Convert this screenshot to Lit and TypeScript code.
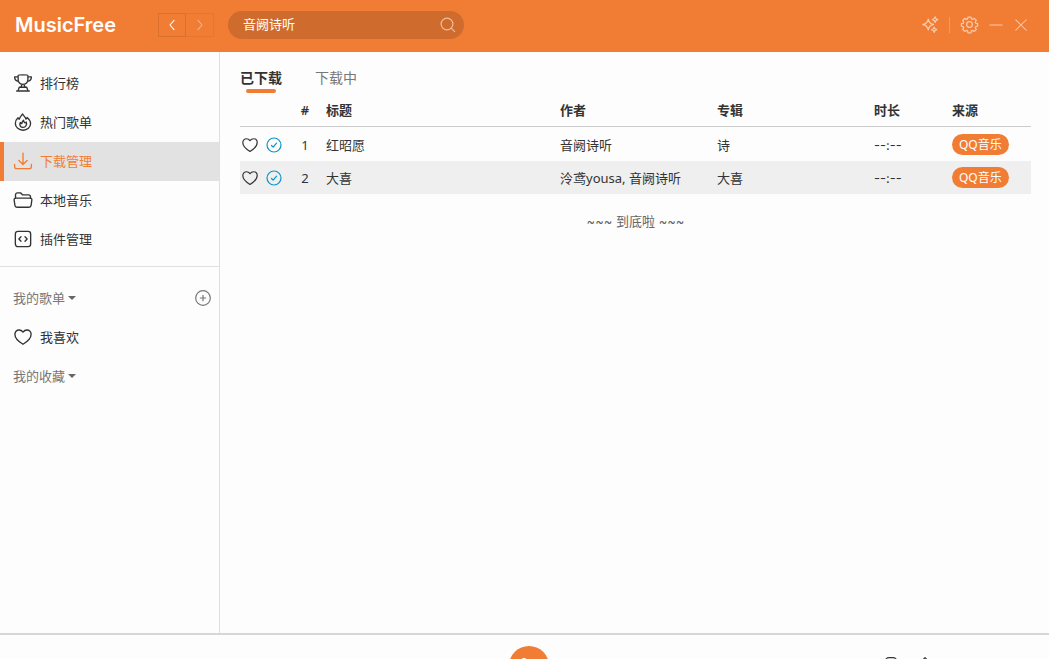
import { LitElement, html, css, svg, TemplateResult } from "lit";
import { customElement, property, state } from "lit/decorators.js";
import { classMap } from "lit/directives/class-map.js";

const icons: Record<string, TemplateResult> = {
  trophy: svg`<path d="M5.500 2c0-1 13-1 13 0v5.300c0 3.600-2.700 6.500-6.500 6.500s-6.500-2.900-6.500-6.500zM5.500 3.800H.8c0 3.400 1.700 5.700 5.200 6M18.500 3.800h4.700c0 3.400-1.700 5.700-5.200 6M10.600 13.700c0 1.800-.6 2.900-1.800 4M13.400 13.700c0 1.800.6 2.900 1.800 4M7 17.700h10l1.600 4.800H5.400zM3.600 22.600h16.800"/>`,
  fire: svg`<path d="M11.500 1.200c1 2.500 3.700 4 4.400 6.800.8-.3 1.300-1 1.600-2 2.800 2.300 4.600 5 4.600 8 0 5.100-4.500 9-10 9S1.800 19.100 1.800 14c0-3 1.300-5.700 3.500-7.700.4 1 1 1.700 1.700 2 .6-2.700 2.700-4.900 4.500-7.100z"/><path d="M12.600 9.500c.2 2 .9 3 2.100 3.700.8-.2 1.200-.6 1.600-1.200 1.300 3.600-.6 7.200-4.200 7.200s-5.300-3.500-3.700-6.500c.7.9 1.200 1.300 2 1.400.2-1.900.9-3.200 2.200-4.600z"/>`,
  download: svg`<path d="M12 1.500v15M6.500 11.200l5.500 5.500 5.500-5.500M.8 16.500v2.800c0 1.700 1.200 2.900 2.900 2.900h16.600c1.700 0 2.900-1.200 2.900-2.900v-2.800"/>`,
  folder: svg`<path d="M2 9.500V5.300C2 3.500 3 2.500 4.700 2.500h4l3 2.700h7.500c1.700 0 2.800 1 2.800 2.700v1.800"/><path d="M2.500 9.500h19c1.700 0 2.500 1 2.300 2.500l-1 7.200c-.2 1.500-1.200 2.500-2.800 2.500H4c-1.600 0-2.600-1-2.800-2.500L.2 12C0 10.500.8 9.500 2.500 9.500z"/>`,
  plugin: svg`<rect x="1.800" y="1.800" width="20.400" height="20.400" rx="3.400"/><path d="M9.300 9L6.500 12l2.800 3M14.700 9l2.800 3-2.800 3"/>`,
  heart: svg`<path d="M12 21.700C5.700 18 1.200 13.600 1.200 8.400 1.200 5.100 3.600 2.600 6.700 2.600c2.300 0 4 1.100 5.300 2.900 1.300-1.800 3-2.900 5.300-2.900 3.100 0 5.500 2.500 5.500 5.800 0 5.200-4.500 9.600-10.800 13.300z"/>`,
  check: svg`<circle cx="12" cy="12" r="10.500"/><path d="M8.200 12.700l2.600 2.600 5-6.100"/>`,
  plus: svg`<circle cx="12" cy="12" r="11"/><path d="M12 8v8M8 12h8"/>`,
  left: svg`<path d="M15.500 4l-7 8 7 8"/>`,
  right: svg`<path d="M8.500 4l7 8-7 8"/>`,
  search: svg`<circle cx="10.500" cy="10.500" r="8.800"/><path d="M16.800 16.800l5.200 5.200"/>`,
  sparkles: svg`<path d="M8.800 4.500c.9 5 2.600 6.700 7.500 7.500-4.900.9-6.600 2.600-7.500 7.600C7.900 14.600 6.200 12.900 1.300 12c4.900-.8 6.600-2.500 7.500-7.500zM18.500 1.200c.5 2.600 1.300 3.400 3.900 4-2.600.5-3.400 1.300-3.900 3.900-.5-2.600-1.300-3.400-3.900-3.900 2.600-.6 3.400-1.400 3.900-4zM17.200 15.700c.4 2.300 1.300 3.200 3.600 3.700-2.300.4-3.200 1.300-3.600 3.600-.5-2.300-1.400-3.200-3.700-3.600 2.300-.5 3.200-1.400 3.700-3.700z"/>`,
  gear: svg`<circle cx="12" cy="12" r="4"/><path d="M9.900 1.500h4.200l.6 2.600 1.600.7 2.400-1.400 2.900 2.900-1.400 2.400.7 1.600 2.600.6v3.200l-2.600.9-.7 1.500 1.400 2.500-2.900 2.700-2.400-1.300-1.600.7-.6 2.600H9.900l-.6-2.600-1.600-.7-2.400 1.300-2.900-2.700L3.800 16.500 3.100 15l-2.600-.9v-3.200l2.600-.6.7-1.600-1.400-2.400 2.900-2.900 2.400 1.400 1.600-.7z"/>`,
  minimize: svg`<path d="M1.500 12h21"/>`,
  close: svg`<path d="M3 3l18 18M21 3L3 21"/>`,
  note: svg`<rect x="3" y="1" width="18" height="20" rx="6"/>`,
  lyric: svg`<path d="M12 1L1 12v10h22V12z"/>`,
};

@customElement("mf-icon")
class MfIcon extends LitElement {
  @property() name = "";
  static styles = css`
    :host { display: inline-flex; flex: none; width: 18px; height: 18px; }
    svg {
      width: 100%; height: 100%; fill: none; stroke: currentColor;
      stroke-width: 1.8; stroke-linejoin: round; stroke-linecap: round; overflow: visible;
    }
  `;
  render() {
    return html`<svg viewBox="0 0 24 24" aria-hidden="true">${icons[this.name]}</svg>`;
  }
}

interface Song { title: string; artist: string; album: string; duration: string; source: string; }

@customElement("app-root")
class AppRoot extends LitElement {
  @state() private active = "下载管理";
  @state() private tab = "已下载";

  private nav = [
    ["trophy", "排行榜"],
    ["fire", "热门歌单"],
    ["download", "下载管理"],
    ["folder", "本地音乐"],
    ["plugin", "插件管理"],
  ];

  private songs: Song[] = [
    { title: "红昭愿", artist: "音阙诗听", album: "诗", duration: "--:--", source: "QQ音乐" },
    { title: "大喜", artist: "泠鸢yousa, 音阙诗听", album: "大喜", duration: "--:--", source: "QQ音乐" },
  ];

  static styles = css`
    * { box-sizing: border-box; }
    :host {
      --primary: #f17d34;
      --line: #e0e0e0;
      display: flex; flex-direction: column; height: 100vh; overflow: hidden;
      background: #fdfdfd; color: #333;
      font: 13px/20px "Noto Sans", "Noto Sans CJK SC", sans-serif;
    }
    button { font: inherit; color: inherit; background: none; border: 0; padding: 0; display: inline-flex; align-items: center; justify-content: center; }
    a { color: inherit; text-decoration: none; }

    .header { flex: none; height: 52px; padding: 0 21px 2px 15px; display: flex; align-items: center; background: var(--primary); color: #fff; }
    .logo { width: 143px; font: 600 20px/28px Inter, sans-serif; }
    .history { display: flex; margin-right: 14px; }
    .history button { width: 28px; height: 24px; border: 1px solid #d9702e; }
    .history button:disabled { border-color: #e67530; border-left: 0; color: #f7b38a; }
    .history mf-icon { width: 14px; height: 14px; }
    .search { width: 236px; height: 28px; padding: 0 8px 0 15px; display: flex; align-items: center; border-radius: 14px; background: #cf6c2d; }
    .search input { flex: 1; min-width: 0; padding: 0 0 2px; border: 0; outline: 0; background: none; color: #fff; font: inherit; }
    .search button { color: #f0bf9f; }
    .search mf-icon { width: 16px; height: 16px; }
    .window { margin-left: auto; padding-bottom: 1px; display: flex; align-items: center; color: #f9c9ab; }
    .window mf-icon { width: 17px; height: 17px; }
    .window .small { width: 14px; height: 14px; }
    .window button + button { margin-left: 11px; }
    .window .rule { width: 1px; height: 16px; margin: 0 11px 0 10px; background: #f4976a; }

    .body { flex: 1; min-height: 0; display: flex; }
    .side { flex: none; width: 220px; padding-top: 12px; border-right: 1px solid var(--line); }
    .item { height: 39px; padding: 0 12px 1px 10px; display: flex; align-items: center; gap: 8px; border-left: 4px solid transparent; }
    .item.active { background: #e2e2e2; border-color: var(--primary); color: var(--primary); }
    .divider { margin: 7px 0 12px; border: 0; border-top: 1px solid var(--line); }
    .group { height: 39px; padding: 0 8px 1px 13px; display: flex; align-items: center; justify-content: space-between; color: #777; }
    .group button { gap: 3px; }
    .caret { border: 4px solid transparent; border-top-color: #666; border-bottom: 0; }
    .group mf-icon { width: 16px; height: 16px; }

    .main { flex: 1; min-width: 0; padding: 0 18px 0 20px; overflow: hidden; }
    .tabs { height: 42px; padding-top: 15px; display: flex; align-items: flex-start; gap: 33px; font-size: 14px; }
    .tab { flex-direction: column; line-height: 22px; color: #777; }
    .tab.on { color: #333; font-weight: 600; }
    .tab.on::after { content: ""; width: 30px; height: 4px; border-radius: 2px; background: var(--primary); }

    table { width: 100%; table-layout: fixed; border-collapse: separate; border-spacing: 0; }
    th, td { height: 33px; padding: 0 6px; text-align: left; white-space: nowrap; }
    th { font-weight: 600; border-bottom: 1px solid #ccc; }
    tbody::before { content: ""; display: table-row; height: 1px; }
    tbody tr:nth-child(even) { background: #efefef; }
    .c-ops { width: 54px; } .c-no { width: 26px; } .c-mid { width: 157px; } .c-time { width: 78px; } .c-src { width: 85px; }
    th.no, td.no { padding: 0 4px 0 0; text-align: center; }
    td.ops { padding: 0 2px; }
    .acts { display: flex; align-items: center; gap: 8px; }
    .acts mf-icon { width: 16px; height: 16px; }
    .done { color: #0a95c8; }
    .tag { display: block; width: fit-content; padding: 0 7px; border-radius: 11px; font-size: 12px; line-height: 21px; background: var(--primary); color: #fff; }
    .time, .end { font-family: Inter, "Noto Sans CJK SC", sans-serif; }
    .end { margin: 0; padding-top: 17px; text-align: center; color: #666; }

    .player { flex: none; height: 26px; overflow: hidden; border-top: 2px solid #d6d6d6; padding: 11px 0 0 9px; display: grid; grid-template-columns: 1fr 40px 1fr; }
    .play { grid-column: 2; width: 40px; height: 40px; border-radius: 50%; background: var(--primary); color: #fff; }
    .play svg { width: 16px; height: 16px; fill: #fff; }
    .extra { display: flex; justify-content: flex-end; align-items: flex-start; gap: 18px; padding: 11px 116px 0 0; }
    .extra mf-icon { width: 16px; height: 16px; }
  `;

  render() {
    return html`
      <header class="header">
        <div class="logo">MusicFree</div>
        <div class="history">
          <button aria-label="后退"><mf-icon name="left"></mf-icon></button>
          <button aria-label="前进" disabled><mf-icon name="right"></mf-icon></button>
        </div>
        <form class="search" @submit=${(e: Event) => e.preventDefault()}>
          <input aria-label="搜索" .value=${"音阙诗听"} />
          <button aria-label="搜索"><mf-icon name="search"></mf-icon></button>
        </form>
        <div class="window">
          <button aria-label="主题"><mf-icon name="sparkles"></mf-icon></button>
          <span class="rule"></span>
          <button aria-label="设置"><mf-icon name="gear"></mf-icon></button>
          <button aria-label="最小化"><mf-icon class="small" name="minimize"></mf-icon></button>
          <button aria-label="关闭"><mf-icon class="small" name="close"></mf-icon></button>
        </div>
      </header>
      <div class="body">
        <nav class="side">
          ${this.nav.map(([icon, label]) => html`
            <a href="#" class=${classMap({ item: true, active: label === this.active })}
              @click=${() => (this.active = label)}><mf-icon name=${icon}></mf-icon><span>${label}</span></a>`)}
          <hr class="divider" />
          <div class="group">
            <button>我的歌单<span class="caret"></span></button>
            <button aria-label="新建歌单"><mf-icon name="plus"></mf-icon></button>
          </div>
          <a href="#" class="item"><mf-icon name="heart"></mf-icon><span>我喜欢</span></a>
          <div class="group"><button>我的收藏<span class="caret"></span></button></div>
        </nav>
        <main class="main">
          <div class="tabs">
            ${["已下载", "下载中"].map((t) => html`
              <button class=${classMap({ tab: true, on: t === this.tab })} @click=${() => (this.tab = t)}>${t}</button>`)}
          </div>
          <table>
            <colgroup>
              <col class="c-ops" /><col class="c-no" /><col /><col class="c-mid" />
              <col class="c-mid" /><col class="c-time" /><col class="c-src" />
            </colgroup>
            <thead>
              <tr><th></th><th class="no">#</th><th>标题</th><th>作者</th><th>专辑</th><th>时长</th><th>来源</th></tr>
            </thead>
            <tbody>
              ${this.songs.map((s, i) => html`
                <tr>
                  <td class="ops"><div class="acts">
                    <button aria-label="喜欢"><mf-icon name="heart"></mf-icon></button>
                    <button class="done" aria-label="已下载"><mf-icon name="check"></mf-icon></button>
                  </div></td>
                  <td class="no">${i + 1}</td>
                  <td>${s.title}</td>
                  <td>${s.artist}</td>
                  <td>${s.album}</td>
                  <td class="time">${s.duration}</td>
                  <td><span class="tag">${s.source}</span></td>
                </tr>`)}
            </tbody>
          </table>
          <p class="end">~~~ 到底啦 ~~~</p>
        </main>
      </div>
      <footer class="player">
        <button class="play" aria-label="播放"><svg viewBox="0 0 16 16"><path d="M2 0q-1 0-1 2v12q0 2 2 1l11-6q2-1 0-2L4 0q-1-.6-2 0z"/></svg></button>
        <div class="extra"><mf-icon name="note"></mf-icon><mf-icon name="lyric"></mf-icon></div>
      </footer>
    `;
  }
}
